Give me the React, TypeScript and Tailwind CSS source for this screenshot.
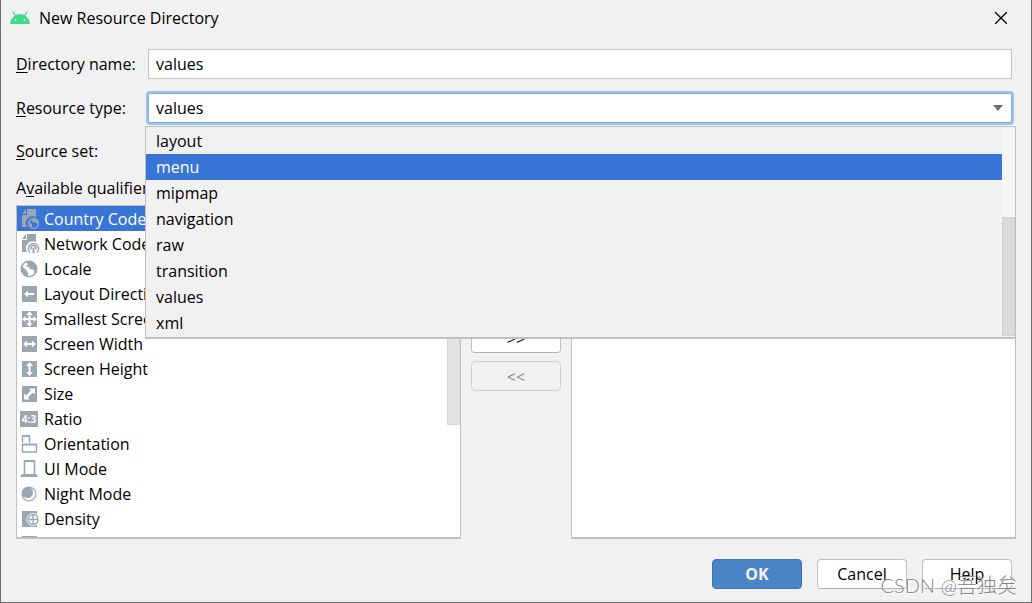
import { useState } from 'react';
import type { ReactNode } from 'react';

const resourceTypes = ['layout', 'menu', 'mipmap', 'navigation', 'raw', 'transition', 'values', 'xml'];

const tile = <path d="M2 2h15v16H2z" fill="currentColor" />;

const sheet = (
  <>
    <path d="M6 0v5H2z" fill="currentColor" />
    <path d="M7 0h9v8a7 7 0 0 0-9 10H2V6h5z" fill="currentColor" />
  </>
);

const qualifiers: { label: string; icon: ReactNode }[] = [
  {
    label: 'Country Code',
    icon: (
      <>
        {sheet}
        <circle cx="13.5" cy="14.5" r="5" fill="none" stroke="currentColor" strokeWidth="1.3" />
        <path d="M9 12l3 3v3.5l-2-1zM12 10l4 .5 2 3-.5 2-2-2-2.5-.5-1.5-1.5z" fill="currentColor" />
      </>
    ),
  },
  {
    label: 'Network Code',
    icon: (
      <>
        {sheet}
        <g fill="none" stroke="currentColor" strokeWidth="1.5">
          <path d="M10 18.5a5.2 5.2 0 1 1 7 0" />
          <path d="M11.5 15.5a2.5 2.5 0 1 1 4 0" />
          <path d="M13.5 13.5v6" strokeWidth="2" />
        </g>
      </>
    ),
  },
  {
    label: 'Locale',
    icon: (
      <>
        <circle cx="9" cy="10" r="7.7" fill="none" stroke="currentColor" strokeWidth="1.6" />
        <path
          d="M2 7l5 5 1 2v3.5L4.5 16 1.5 12zM6 3l4-1 4 1.5 2.5 4L17 11l-1.5 4-1.5-1v-3l-4-1-1-2-2.5-.5L6 6.5l2-1z"
          fill="currentColor"
        />
      </>
    ),
  },
  {
    label: 'Layout Direction',
    icon: (
      <>
        {tile}
        <path d="M4 10l4-3.5V9h6v2H8v2.5z" fill="white" />
      </>
    ),
  },
  {
    label: 'Smallest Screen Width',
    icon: (
      <>
        {tile}
        <path
          d="M9.5 2l3 4h-2v3h3V7l3.5 3-3.5 3v-2h-3v3h2l-3 4-3-4h2v-3h-3v2L2 10l3.5-3v2h3V6h-2z"
          fill="white"
        />
      </>
    ),
  },
  {
    label: 'Screen Width',
    icon: (
      <>
        {tile}
        <path d="M3 10l4-3.5V9h5V6.5l4 3.5-4 3.5V11H7v2.5z" fill="white" />
      </>
    ),
  },
  {
    label: 'Screen Height',
    icon: (
      <>
        {tile}
        <path d="M9.5 3L13 7h-2.5v6H13l-3.5 4L6 13h2.5V7H6z" fill="white" />
      </>
    ),
  },
  {
    label: 'Size',
    icon: (
      <>
        {tile}
        <path d="M15 4.5v6l-2-2-5 5 2 2H4v-6l2 2 5-5-2-2z" fill="white" />
      </>
    ),
  },
  {
    label: 'Ratio',
    icon: (
      <>
        <path d="M0 2h18v16H0z" fill="currentColor" />
        <text x="9" y="14" textAnchor="middle" fontSize="10" fontWeight="700" fill="white">
          4:3
        </text>
      </>
    ),
  },
  {
    label: 'Orientation',
    icon: (
      <g fill="none" stroke="currentColor" strokeWidth="1.4">
        <path d="M2.5 8.500V2h7v7" />
        <path d="M2 2h8M2 10.500h15" strokeWidth="2" />
        <path d="M2.5 10v8h14v-8" />
      </g>
    ),
  },
  {
    label: 'UI Mode',
    icon: (
      <>
        <path d="M4.5 16V2h10v14" fill="none" stroke="currentColor" strokeWidth="1.6" />
        <path d="M4 2h11" stroke="currentColor" strokeWidth="2" />
        <path d="M2 15h14l2 3H0z" fill="currentColor" />
      </>
    ),
  },
  {
    label: 'Night Mode',
    icon: (
      <>
        <circle cx="9" cy="10" r="6.9" fill="white" stroke="currentColor" strokeWidth="1.2" />
        <circle cx="7.5" cy="8.5" r="5.5" fill="currentColor" />
      </>
    ),
  },
  {
    label: 'Density',
    icon: (
      <>
        {tile}
        <circle cx="13" cy="10.5" r="6.5" fill="white" />
        <circle cx="13" cy="10.5" r="5" fill="white" stroke="currentColor" strokeWidth="1.4" />
        <path d="M13 6v9M8.5 10.500h9" stroke="currentColor" strokeWidth="1.4" />
      </>
    ),
  },
  { label: 'Touch Screen', icon: tile },
];

function AndroidHead() {
  return (
    <svg viewBox="0 0 20 14" className="h-[14px] w-5" aria-hidden="true">
      <path d="M3 .8l2.2 3.7M17 .8l-2.2 3.7" stroke="#3ddc84" strokeWidth="1.2" strokeLinecap="round" />
      <path d="M0 13a10 10 0 0 1 20 0z" fill="#3ddc84" />
      <circle cx="5.5" cy="9" r=".9" fill="white" />
      <circle cx="14.5" cy="9" r=".9" fill="white" />
    </svg>
  );
}

export default function App() {
  const [name, setName] = useState('values');
  const [type, setType] = useState('values');
  const [active, setActive] = useState('menu');
  const [qualifier, setQualifier] = useState('Country Code');

  const labelClass = 'w-[132px] shrink-0';
  const buttonClass = 'h-[30px] w-[90px] rounded-[4px] border border-[#c0c0c0] border-b-[#b0b0b0] bg-white';

  return (
    <div className="relative flex h-screen flex-col overflow-hidden border-x border-b border-[#6e6e6e] bg-[#f1f1f1] font-['Open_Sans','Noto_Sans_CJK_SC',sans-serif] text-[16px] leading-6 text-black">
      {/* Title bar */}
      <header className="flex h-9 shrink-0 items-center pr-6 pl-[9px]">
        <AndroidHead />
        <h1 className="ml-[9px]">New Resource Directory</h1>
        <button type="button" aria-label="Close" className="ml-auto">
          <svg viewBox="0 0 12 12" className="size-3" aria-hidden="true">
            <path d="M0 0l12 12M12 0L0 12" stroke="black" strokeWidth="1.3" />
          </svg>
        </button>
      </header>

      {/* Form */}
      <div className="mt-[13px] shrink-0 pr-[19px] pl-[15px]">
        <div className="flex items-center">
          <label htmlFor="name" className={labelClass}>
            <u className="underline-offset-2">D</u>irectory name:
          </label>
          <input
            id="name"
            value={name}
            onChange={(e) => setName(e.target.value)}
            className="h-[30px] min-w-0 flex-1 border border-[#c4c4c4] bg-white px-[7px] outline-none"
          />
        </div>

        <div className="mt-[14px] flex items-center">
          <label htmlFor="type" className={labelClass}>
            <u className="underline-offset-2">R</u>esource type:
          </label>
          <div className="relative min-w-0 flex-1">
            <select
              id="type"
              value={type}
              onChange={(e) => setType(e.target.value)}
              className="block h-[30px] w-full appearance-none rounded-[2px] border border-[#87afda] bg-white px-[7px] ring-2 ring-[#97c3f3] outline-none"
            >
              {resourceTypes.map((item) => (
                <option key={item}>{item}</option>
              ))}
            </select>
            <svg
              viewBox="0 0 10 6"
              className="pointer-events-none absolute top-3 right-[9px] h-[6px] w-[10px]"
              aria-hidden="true"
            >
              <path d="M0 0h10L5 6z" fill="#6e6e6e" />
            </svg>

            {/* Open drop-down list */}
            <div className="absolute top-[33px] -right-1 -left-[3px] z-10 flex border border-b-2 border-[#c0c0c0] bg-[#f1f1f1] py-px">
              <ul role="listbox" aria-label="Resource type" className="flex-1">
                {resourceTypes.map((item) => (
                  <li
                    key={item}
                    role="option"
                    aria-selected={item === active}
                    onMouseEnter={() => setActive(item)}
                    onClick={() => setType(item)}
                    className={`h-[26px] px-[10px] leading-[26px] ${item === active ? 'bg-[#3875d7] text-white' : ''}`}
                  >
                    {item}
                  </li>
                ))}
              </ul>
              <div className="flex w-[13px] flex-col justify-end bg-[#f5f5f5]">
                <div className="h-[119px] border border-[#d0d0d0] bg-[#dadada]" />
              </div>
            </div>
          </div>
        </div>

        <p className="mt-4">
          <u className="underline-offset-2">S</u>ource set:
        </p>
      </div>

      {/* Qualifier lists */}
      <p className="mt-[13px] shrink-0 pl-[15px]" id="available">
        A<u className="underline-offset-2">v</u>ailable qualifiers:
      </p>
      <div className="mt-[5px] grid min-h-0 flex-1 grid-cols-[1fr_90px_1fr] grid-rows-[minmax(0,1fr)] gap-[10px] px-[15px]">
        <div className="flex overflow-hidden border border-b-2 border-[#c0c0c0] bg-white">
          <ul role="listbox" aria-labelledby="available" className="min-w-0 flex-1">
            {qualifiers.map(({ label, icon }) => (
              <li
                key={label}
                role="option"
                aria-selected={label === qualifier}
                onClick={() => setQualifier(label)}
                className={`flex h-[25px] items-center gap-1 pl-[3px] whitespace-nowrap ${label === qualifier ? 'bg-[#3875d7] text-white' : ''}`}
              >
                <svg viewBox="0 0 20 20" className="size-5 shrink-0 text-[#9aa7b0]" aria-hidden="true">
                  {icon}
                </svg>
                {label}
              </li>
            ))}
          </ul>
          <div className="w-[13px]">
            <div className="h-[219px] border border-[#d9d9d9] bg-[#e3e3e3]" />
          </div>
        </div>

        <div className="flex flex-col gap-2 pt-[118px]">
          <button type="button" className={`${buttonClass} pt-[2px]`}>
            &gt;&gt;
          </button>
          <button
            type="button"
            disabled
            className="h-[30px] w-[90px] rounded-[4px] border border-[#cfcfcf] pt-[2px] text-[#8c8c8c]"
          >
            &lt;&lt;
          </button>
        </div>

        <div className="border border-b-2 border-[#c0c0c0] bg-white" />
      </div>

      {/* Actions */}
      <footer className="mt-5 mb-[13px] flex shrink-0 justify-end gap-[15px] pr-[19px]">
        <button
          type="button"
          className="h-[30px] w-[90px] rounded-[4px] border border-[#3b76b8] bg-[#4a86c7] font-bold text-[#f1f1f1]"
        >
          OK
        </button>
        <button type="button" className={buttonClass}>
          Cancel
        </button>
        <button type="button" className={buttonClass}>
          Help
        </button>
      </footer>

      <span className="pointer-events-none absolute right-[14px] bottom-[5px] font-['Lato','Noto_Sans_CJK_SC',sans-serif] text-[20px] font-light text-[#858585] [text-shadow:1px_1px_0_#ffffff]">
        CSDN @吾独矣
      </span>
    </div>
  );
}
